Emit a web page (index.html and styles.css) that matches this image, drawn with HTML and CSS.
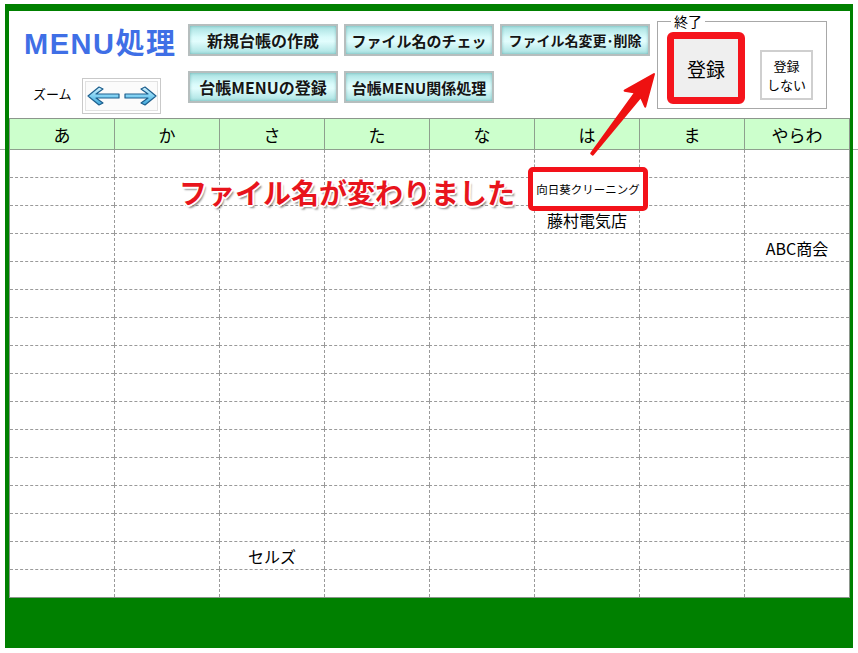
FILE: index.html
```html
<!DOCTYPE html>
<html lang="ja">

<head>
    <meta charset="UTF-8">
    <meta name="viewport" content="width=device-width, initial-scale=1.0">
    <title>MENU処理</title>
    <link rel="stylesheet" href="styles.css">
</head>

<body>
    <div class="frame">
        <div class="panel">
            <div class="top">
                <div class="brand">
                    <h1 class="title">MENU処理</h1>
                    <div class="zoom">
                        <span class="zoom-label">ズーム</span>
                        <button class="zoom-btn">
                            <svg width="70" height="22" viewBox="0 0 70 22">
                                <defs>
                                    <linearGradient id="ag" x1="0" y1="0" x2="0" y2="1">
                                        <stop offset="0" stop-color="#d6f4ff" />
                                        <stop offset="0.5" stop-color="#7fd0f2" />
                                        <stop offset="1" stop-color="#3fa6d8" />
                                    </linearGradient>
                                </defs>
                                <polygon points="1,11 12,2 16,4 9,9 32,9 32,13 9,13 16,18 12,20" fill="url(#ag)" stroke="#1d5f8e" stroke-width="1.2" stroke-linejoin="round" />
                                <polygon points="69,11 58,2 54,4 61,9 38,9 38,13 61,13 54,18 58,20" fill="url(#ag)" stroke="#1d5f8e" stroke-width="1.2" stroke-linejoin="round" />
                            </svg>
                        </button>
                    </div>
                </div>
                <div class="menu">
                    <button class="mbtn big">新規台帳の作成</button>
                    <button class="mbtn">ファイル名のチェッ</button>
                    <button class="mbtn small">ファイル名変更･削除</button>
                    <button class="mbtn big">台帳MENUの登録</button>
                    <button class="mbtn">台帳MENU関係処理</button>
                </div>
                <fieldset class="exit">
                    <legend>終了</legend>
                    <button class="save">登録</button>
                    <button class="nosave"><span>登録</span><span>しない</span></button>
                </fieldset>
            </div>

            <div class="grid">
                <div class="th">あ</div><div class="th">か</div><div class="th">さ</div><div class="th">た</div><div class="th">な</div><div class="th">は</div><div class="th">ま</div><div class="th">やらわ</div>
                <div class="td"></div><div class="td"></div><div class="td"></div><div class="td"></div><div class="td"></div><div class="td"></div><div class="td"></div><div class="td"></div>
                <div class="td"></div><div class="td"></div><div class="td"></div><div class="td"></div><div class="td"></div><div class="td hl"><span class="mark">向日葵クリーニング</span></div><div class="td"></div><div class="td"></div>
                <div class="td"></div><div class="td"></div><div class="td"></div><div class="td"></div><div class="td"></div><div class="td">藤村電気店</div><div class="td"></div><div class="td"></div>
                <div class="td"></div><div class="td"></div><div class="td"></div><div class="td"></div><div class="td"></div><div class="td"></div><div class="td"></div><div class="td">ABC商会</div>
                <div class="td"></div><div class="td"></div><div class="td"></div><div class="td"></div><div class="td"></div><div class="td"></div><div class="td"></div><div class="td"></div>
                <div class="td"></div><div class="td"></div><div class="td"></div><div class="td"></div><div class="td"></div><div class="td"></div><div class="td"></div><div class="td"></div>
                <div class="td"></div><div class="td"></div><div class="td"></div><div class="td"></div><div class="td"></div><div class="td"></div><div class="td"></div><div class="td"></div>
                <div class="td"></div><div class="td"></div><div class="td"></div><div class="td"></div><div class="td"></div><div class="td"></div><div class="td"></div><div class="td"></div>
                <div class="td"></div><div class="td"></div><div class="td"></div><div class="td"></div><div class="td"></div><div class="td"></div><div class="td"></div><div class="td"></div>
                <div class="td"></div><div class="td"></div><div class="td"></div><div class="td"></div><div class="td"></div><div class="td"></div><div class="td"></div><div class="td"></div>
                <div class="td"></div><div class="td"></div><div class="td"></div><div class="td"></div><div class="td"></div><div class="td"></div><div class="td"></div><div class="td"></div>
                <div class="td"></div><div class="td"></div><div class="td"></div><div class="td"></div><div class="td"></div><div class="td"></div><div class="td"></div><div class="td"></div>
                <div class="td"></div><div class="td"></div><div class="td"></div><div class="td"></div><div class="td"></div><div class="td"></div><div class="td"></div><div class="td"></div>
                <div class="td"></div><div class="td"></div><div class="td"></div><div class="td"></div><div class="td"></div><div class="td"></div><div class="td"></div><div class="td"></div>
                <div class="td"></div><div class="td"></div><div class="td">セルズ</div><div class="td"></div><div class="td"></div><div class="td"></div><div class="td"></div><div class="td"></div>
                <div class="td"></div><div class="td"></div><div class="td"></div><div class="td"></div><div class="td"></div><div class="td"></div><div class="td"></div><div class="td"></div>
                <div class="note">ファイル名が変わりました</div>
            </div>
        </div>
    </div>

    <svg class="arrow" width="858" height="653" viewBox="0 0 858 653">
        <polygon points="591.2,153.4 635.2,92.6 624.6,90.7 654,74 645.2,106.7 640.8,96.8 592.8,154.6" fill="#ee1111" stroke="#ee1111" stroke-width="2" stroke-linejoin="round" />
    </svg>
</body>

</html>
```

FILE: styles.css
```css
* {
    margin: 0;
    padding: 0;
    box-sizing: border-box;
}

body {
    position: relative;
    width: 858px;
    height: 653px;
    overflow: hidden;
    background: #fff;
    color: #000;
    font-family: "Noto Sans CJK JP", sans-serif;
}

/* thin line running across the whole window under the header row */
body::before {
    content: "";
    position: absolute;
    left: 0;
    right: 0;
    top: 149px;
    height: 1px;
    background: #a8a8a8;
    z-index: -1;
}

.frame {
    margin: 4px 0 0 5px;
    width: 848px;
    background: #008000;
    padding: 7px 3px 50px 4px;
}

.panel {
    background: #fff;
}

.top {
    height: 107px;
    display: flex;
    align-items: flex-start;
}

.brand {
    width: 179px;
    padding: 15px 0 0 15px;
}

.title {
    font: bold 29px/36px "Liberation Sans", "Noto Sans CJK JP", sans-serif;
    color: #3f6fe6;
    letter-spacing: 1.5px;
    white-space: nowrap;
}

.zoom {
    display: flex;
    align-items: center;
    margin-top: 16px;
    padding-left: 9px;
}

.zoom-label {
    width: 49px;
    font-size: 13px;
    padding-bottom: 5px;
}

.zoom-btn {
    width: 79px;
    height: 36px;
    display: flex;
    align-items: center;
    justify-content: center;
    background: #fbfbfb;
    border: 1px solid #c9c9c9;
    box-shadow: inset 0 0 0 2px #fff, inset 0 0 0 3px #e2e2e2;
}

.menu {
    display: grid;
    grid-template-columns: repeat(3, 150px);
    grid-auto-rows: 32px;
    gap: 15px 6px;
    margin-top: 13px;
}

.mbtn {
    border: 2px solid #b6bebe;
    background: linear-gradient(180deg, #a6e0e0 0%, #d9fbfb 40%, #e2fdfd 55%, #a9e2e2 100%);
    box-shadow: inset 0 0 3px rgba(0, 100, 100, .35);
    font: bold 15px "Noto Sans CJK JP", sans-serif;
    color: #151515;
    white-space: nowrap;
}

.mbtn.big {
    font-size: 16px;
}

.mbtn.small {
    font-size: 14px;
}

.exit {
    margin: 3px 0 0 7px;
    width: 170px;
    height: 95px;
    border: 1px solid #a8a8a8;
    display: flex;
    align-items: flex-start;
}

.exit legend {
    margin-left: 13px;
    padding: 0 3px;
    font-size: 14px;
    line-height: 14px;
}

.save {
    margin: 4px 0 0 9px;
    width: 78px;
    height: 72px;
    border: 7px solid #f5141c;
    border-radius: 6px;
    background: #efefef;
    font: 19px "Noto Sans CJK JP", sans-serif;
    color: #000;
}

.nosave {
    margin: 22px 0 0 15px;
    width: 53px;
    height: 50px;
    display: flex;
    flex-direction: column;
    align-items: center;
    justify-content: center;
    gap: 1px;
    border: 2px solid #cfcfcf;
    background: #fff;
    font: 13px/18px "Noto Sans CJK JP", sans-serif;
    color: #000;
}

.grid {
    position: relative;
    display: grid;
    grid-template-columns: 104px repeat(7, 105px);
    grid-template-rows: 31px 27px repeat(15, 28px);
    border: 1px solid #8c968c;
}

.th {
    display: flex;
    align-items: center;
    justify-content: center;
    background: #ccffcc;
    border-left: 1px solid #8ea08e;
    border-bottom: 1px solid #8ea08e;
    font-size: 17px;
}

.th:first-child {
    border-left: none;
}

.td {
    display: flex;
    align-items: center;
    justify-content: center;
    border-left: 1px dashed #9a9a9a;
    border-top: 1px dashed #9a9a9a;
    font-size: 16px;
    white-space: nowrap;
}

.td:nth-child(8n+1) {
    border-left: none;
}

.td:nth-child(-n+16) {
    border-top: none;
}

.td.hl {
    position: relative;
}

.mark {
    position: absolute;
    left: -7px;
    top: -11px;
    width: 120px;
    height: 44px;
    display: flex;
    align-items: center;
    justify-content: center;
    border: 5px solid #f3121a;
    border-radius: 5px;
    background: #fff;
    font-size: 11.5px;
    z-index: 1;
}

.note {
    position: absolute;
    left: 169px;
    top: 59px;
    font: bold 28px/28px "Noto Sans CJK JP", sans-serif;
    color: #e8141c;
    white-space: nowrap;
    text-shadow: -1px -1px 0 #fff, 1px -1px 0 #fff, -1px 1px 0 #fff, 1px 1px 0 #fff,
        0 2px 0 #fff, 2px 0 0 #fff, 2px 3px 2px rgba(0, 0, 0, .45);
}

.arrow {
    position: absolute;
    left: 0;
    top: 0;
    pointer-events: none;
}
```
